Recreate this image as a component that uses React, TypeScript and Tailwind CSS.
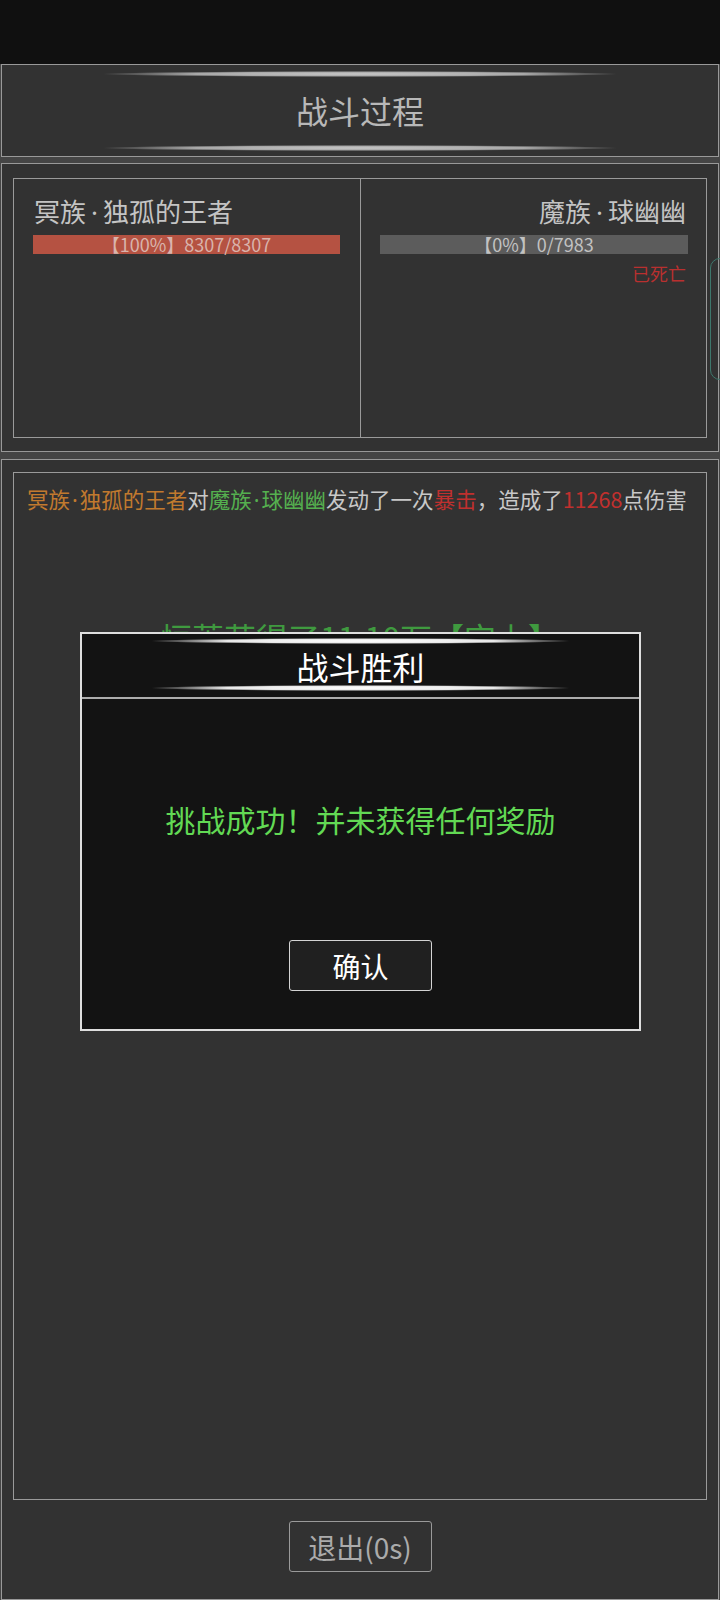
const lens = 'bg-[radial-gradient(ellipse_closest-side,#c8c8c8,#a8a8a8_65%,transparent)]';
const lensWhite = 'bg-[radial-gradient(ellipse_closest-side,#ffffff,#e8e8e8_65%,transparent)]';

// narrow middle dot, like the game's font
function Dot({ className = 'mx-[2px]' }: { className?: string }) {
  return <span className={`font-['Noto_Sans',sans-serif] ${className}`}>·</span>;
}

function PlayerCard({
  race,
  name,
  hp,
  max,
  pct,
  side,
  dead,
}: {
  race: string;
  name: string;
  hp: number;
  max: number;
  pct: string;
  side: 'left' | 'right';
  dead?: boolean;
}) {
  const isLeft = side === 'left';
  return (
    <div className={isLeft ? 'w-[347px] border-r border-[#9a9a9a] pl-[19px] pr-[20px] pt-[15px]' : 'flex-1 pl-[19px] pr-[18px] pt-[15px]'}>
      <div className={`text-[26px] leading-[34px] text-[#c4c4c4] ${isLeft ? 'text-left pl-px' : 'text-right pr-[2px]'}`}>
        {race}
        <Dot className="mx-[5px]" />
        {name}
      </div>
      <div
        className={`mt-[6px] h-[19px] w-full flex items-center justify-center text-[18px] leading-[19px] ${
          dead ? 'bg-[#5c5c5c] text-[#c2c2c2]' : 'bg-[#b55242] text-[#d9b4ac]'
        }`}
      >
        【{pct}】{hp}/{max}
      </div>
      {dead && <div className="mt-[6px] text-right pr-[2px] text-[18px] leading-[26px] text-[#b9302f]">已死亡</div>}
    </div>
  );
}

export default function App() {
  return (
    <div className="relative w-[720px] h-[1600px] overflow-hidden bg-[#454545] flex flex-col font-['Noto_Sans_CJK_SC',sans-serif]">
      {/* status bar */}
      <div className="h-16 shrink-0 bg-[#101010]" />

      {/* title */}
      <div className="h-[93px] shrink-0 mx-px border border-[#999] bg-[#323232] flex flex-col items-center pt-[6px]">
        <div className={`h-[6px] w-[520px] ${lens}`} />
        <div className="mt-[13px] h-[40px] text-[32px] leading-[40px] text-[#b8b8b8]">战斗过程</div>
        <div className={`mt-[15px] h-[6px] w-[520px] ${lens}`} />
      </div>

      {/* players */}
      <div className="mt-[6px] h-[289px] shrink-0 mx-px border border-[#999] bg-[#323232] px-[11px] pt-[14px]">
        <div className="h-[260px] border border-[#9a9a9a] flex">
          <PlayerCard side="left" race="冥族" name="独孤的王者" pct="100%" hp={8307} max={8307} />
          <PlayerCard side="right" race="魔族" name="球幽幽" pct="0%" hp={0} max={7983} dead />
        </div>
      </div>

      {/* log */}
      <div className="mt-[7px] flex-1 mx-px border border-[#999] bg-[#323232] px-[11px] pt-[12px] flex flex-col items-center">
        <div className="h-[1028px] w-full border border-[#9a9a9a] pl-[13px] pt-[11px]">
          <p className="text-[21.5px] leading-[30px] text-[#c8c8c8] whitespace-nowrap">
            <span className="text-[#c27a2e]">
              冥族<Dot />独孤的王者
            </span>
            对
            <span className="text-[#55b04f]">
              魔族<Dot />球幽幽
            </span>
            发动了一次<span className="text-[#c0302e]">暴击</span>，造成了<span className="text-[#c0302e]">11268</span>点伤害
          </p>
          <p className="mt-[102px] pr-[13px] text-center text-[32px] leading-[40px] text-[#3f9a3f]">恒萧获得了11.10万【宝上】</p>
        </div>
        <button className="mt-[21px] w-[143px] h-[51px] rounded-[3px] border-[1.5px] border-[#9a9a9a] text-[28px] leading-none text-[#ababab]">
          退出(0s)
        </button>
      </div>

      {/* side tab */}
      <div className="absolute left-[710px] top-[258px] w-[30px] h-[122px] rounded-[10px] border-[1.5px] border-[#3d786c]" />

      {/* result dialog */}
      <div className="absolute left-[80px] top-[632px] w-[561px] h-[399px] border-2 border-[#dedede] bg-[#131313] flex flex-col">
        <div className="h-[65px] shrink-0 border-b-2 border-[#adadad] flex flex-col items-center pt-[4px]">
          <div className={`h-[6px] w-[423px] ${lensWhite}`} />
          <div className="mt-[4px] h-[36px] text-[32px] leading-[36px] text-white">战斗胜利</div>
          <div className={`mt-[1px] h-[6px] w-[423px] ${lensWhite}`} />
        </div>
        <div className="flex flex-col items-center pt-[100px]">
          <div className="text-[30px] leading-[40px] text-[#62d954]">挑战成功！并未获得任何奖励</div>
          <button className="mt-[101px] w-[143px] h-[51px] rounded-[3px] border-[1.5px] border-[#d4d4d4] bg-[#202020] text-[28px] leading-none text-white">
            确认
          </button>
        </div>
      </div>
    </div>
  );
}
